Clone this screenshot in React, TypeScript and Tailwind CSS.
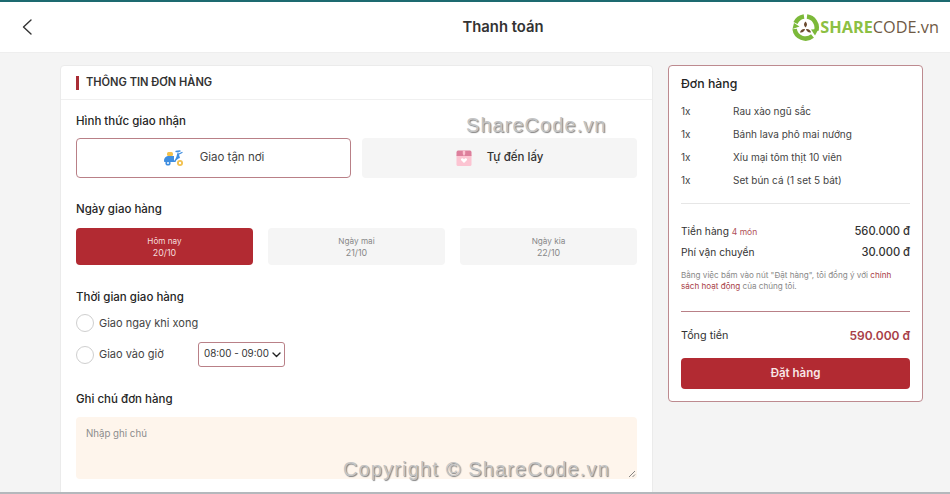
const items = ["Rau xào ngũ sắc", "Bánh lava phô mai nướng", "Xíu mại tôm thịt 10 viên", "Set bún cá (1 set 5 bát)"];

const days = [
  { label: "Hôm nay", date: "20/10", active: true },
  { label: "Ngày mai", date: "21/10", active: false },
  { label: "Ngày kia", date: "22/10", active: false },
];

function Logo() {
  return (
    <div className="flex items-center">
      <svg width="27" height="27" viewBox="0 0 27 27" fill="none">
        <path d="M3.500 9 A11 11 0 0 1 12 2.500" stroke="#7cb93a" strokeWidth="4.500" />
        <path d="M15 2.600 A11 11 0 0 1 24.300 16.500" stroke="#7cb93a" strokeWidth="4.500" />
        <path d="M26.500 15 L23 21.500 L19 15.500 Z" fill="#7cb93a" />
        <path d="M20.500 22 A11 11 0 0 1 2.600 15" stroke="#7cb93a" strokeWidth="4.500" />
        <path d="M0.500 15 L2 9 L7.500 12.500 Z" fill="#7cb93a" />
        <path d="M13.500 7.500 C15.500 9.500 15.500 11.500 13.500 13.500 C11.500 11.500 11.500 9.500 13.500 7.500 Z" fill="#6b4a2e" />
        <path d="M8 18.500 C8.500 16 10.500 14.500 13 15 C12.500 17.500 10.500 19 8 18.500 Z" fill="#6b4a2e" />
        <path d="M19 18.500 C18.500 16 16.500 14.500 14 15 C14.500 17.500 16.500 19 19 18.500 Z" fill="#6b4a2e" />
      </svg>
      <div className="ml-[1px] text-[16.300px] leading-none font-['Open_Sans',sans-serif]">
        <span className="font-bold text-[#8cc043]">SHARE</span>
        <span className="text-[#6f5a45]">CODE.vn</span>
      </div>
    </div>
  );
}

function ScooterIcon() {
  return (
    <svg width="22" height="17" viewBox="0 0 22 17" fill="none">
      <path d="M1 11 C1 7.500 3 6 6 6 L11 6 L11 12 L2 12 C1.400 12 1 11.600 1 11 Z" fill="#3f8ee0" />
      <rect x="4" y="2" width="6" height="4" rx="1.500" fill="#f2c14e" />
      <path d="M15 1.500 L17 8 C15 8.500 13 10 12.500 12 L10 12 C12 10 13.500 8 14 4.500" fill="#3f8ee0" />
      <path d="M13 1.500 L17 1 M16 4 L19 2.500" stroke="#3f8ee0" strokeWidth="1.300" strokeLinecap="round" />
      <circle cx="5" cy="13" r="2.600" fill="#3f8ee0" />
      <circle cx="5" cy="13" r="1" fill="#fff" />
      <circle cx="17" cy="13" r="3" fill="#f2c14e" />
      <circle cx="17" cy="13" r="1.200" fill="#fff" />
    </svg>
  );
}

function BoxIcon() {
  return (
    <svg width="16" height="16" viewBox="0 0 16 16" fill="none">
      <rect x="0.500" y="4" width="15" height="12" rx="1.500" fill="#fcc4d2" />
      <path d="M2 0.500 H14 C15 0.500 15.500 1.500 15.500 2.500 V6 H0.500 V2.500 C0.500 1.500 1 0.500 2 0.500 Z" fill="#dd7f9c" />
      <path d="M6.800 0.500 H9.200 V4 L8 6 L6.800 4 Z" fill="#fcc4d2" />
      <path d="M8 13 L5.200 10.200 C4.300 9 5.800 7.500 7 8.500 L8 9.300 L9 8.500 C10.200 7.500 11.700 9 10.800 10.200 Z" fill="#fff" />
    </svg>
  );
}

function Radio() {
  return <span className="w-[18px] h-[18px] rounded-full border border-[#cfcfcf] bg-white shrink-0" />;
}

export default function App() {
  return (
    <div className="relative h-[494px] overflow-hidden bg-[#f4f4f4] border-b-2 border-[#b4b8bc] font-['Inter',sans-serif] text-[#252525]">
      {/* Header */}
      <header className="h-[53px] bg-white border-t-2 border-[#1d6a70] border-b border-b-[#eeeeee] pl-[21px] pr-[11px] flex items-center justify-between">
        <svg width="12" height="18" viewBox="0 0 12 18" fill="none" stroke="#333" strokeWidth="1.400" strokeLinecap="round" strokeLinejoin="round">
          <path d="M10 2 L2.500 9 L10 16" />
        </svg>
        <h1 className="absolute left-0 right-[-56px] text-center text-[14.800px] font-semibold text-[#333333] pointer-events-none">Thanh toán</h1>
        <Logo />
      </header>

      <div className="flex gap-[15px] pl-[60px] pt-3">
        {/* Left card */}
        <section className="w-[593px] h-[440px] shrink-0 bg-white rounded border border-[#ebebeb]">
          <div className="h-[34px] border-b border-[#f0f0f0] pl-[15px] flex items-center gap-[7px]">
            <span className="w-[3px] h-[14px] bg-[#a92d35]" />
            <h2 className="text-[11.100px] font-semibold text-[#333333]">THÔNG TIN ĐƠN HÀNG</h2>
          </div>

          <div className="px-[15px]">
            <h3 className="mt-[12px] text-[11.500px] leading-[18px] font-medium">Hình thức giao nhận</h3>
            <div className="mt-[8px] flex gap-[11px]">
              <button className="w-[275px] h-10 rounded border border-[#b98087] bg-white flex items-center justify-center gap-[15px] text-[11.500px] text-[#444444]">
                <ScooterIcon />
                Giao tận nơi
              </button>
              <button className="w-[275px] h-10 rounded bg-[#f5f5f5] flex items-center justify-center gap-[15px] text-[11.500px] font-medium text-[#333333]">
                <BoxIcon />
                Tự đến lấy
              </button>
            </div>

            <h3 className="mt-[22px] text-[11.500px] leading-[18px] font-medium">Ngày giao hàng</h3>
            <div className="mt-[10px] flex gap-[15px]">
              {days.map((d) => (
                <button
                  key={d.date}
                  className={`w-[177px] h-[37px] rounded text-[8.200px] leading-[11px] flex flex-col items-center justify-center ${
                    d.active ? "bg-[#b22a32] text-[#f5dcdc]" : "bg-[#f5f5f5] text-[#888888]"
                  }`}
                >
                  <span>{d.label}</span>
                  <span className="text-[8.900px]">{d.date}</span>
                </button>
              ))}
            </div>

            <h3 className="mt-[23px] text-[11.500px] leading-[18px] font-medium">Thời gian giao hàng</h3>
            <div className="mt-[8px] flex items-center gap-[5px] text-[11px] text-[#444444]">
              <Radio />
              Giao ngay khi xong
            </div>
            <div className="mt-[10px] flex items-center text-[11px] text-[#444444]">
              <Radio />
              <span className="ml-[5px] w-[99px]">Giao vào giờ</span>
              <div className="w-[87px] h-[25px] rounded-[3px] border border-[#b98087] pl-[5px] pr-[3px] flex items-center justify-between whitespace-nowrap text-[9.800px] text-[#333333]">
                08:00 - 09:00
                <svg width="9" height="6" viewBox="0 0 9 6" fill="none" stroke="#222" strokeWidth="1.400" strokeLinecap="round" strokeLinejoin="round">
                  <path d="M1 1 L4.500 4.500 L8 1" />
                </svg>
              </div>
            </div>

            <h3 className="mt-[23px] text-[11.500px] leading-[18px] font-medium">Ghi chú đơn hàng</h3>
            <div className="relative mt-[9px] h-[62px] rounded bg-[#fef5ec] px-[10px] py-[10px] text-[9.700px] text-[#8c8c8c]">
              Nhập ghi chú
              <svg className="absolute right-[1px] bottom-[1px]" width="8" height="8" viewBox="0 0 8 8" fill="none" stroke="#666" strokeWidth="0.800">
                <path d="M1 7 L7 1 M4.500 7 L7 4.500" />
              </svg>
            </div>
          </div>
        </section>

        {/* Right card */}
        <aside className="w-[255px] h-[337px] shrink-0 self-start bg-white rounded border border-[#bd8a8f] px-3 pt-[10px]">
          <h2 className="text-[12.300px] leading-[16px] font-medium">Đơn hàng</h2>
          <ul className="mt-[12px] flex flex-col gap-[8px] text-[10px] leading-[15px] text-[#444444]">
            {items.map((name) => (
              <li key={name} className="flex">
                <span className="w-[52px]">1x</span>
                <span>{name}</span>
              </li>
            ))}
          </ul>
          <div className="mt-[15px] border-t border-[#e6e6e6]" />
          <div className="mt-[19px] flex justify-between text-[10.200px] leading-[16px] text-[#333333]">
            <span>
              Tiền hàng <span className="text-[8.500px] text-[#b05058]">4 món</span>
            </span>
            <span className="text-[11.200px] font-medium">560.000 đ</span>
          </div>
          <div className="mt-[4px] flex justify-between text-[10.200px] leading-[16px] text-[#333333]">
            <span>Phí vận chuyển</span>
            <span className="text-[11.200px] font-medium">30.000 đ</span>
          </div>
          <p className="mt-[10px] text-[8.100px] leading-[11px] text-[#888888]">
            Bằng việc bấm vào nút "Đặt hàng", tôi đồng ý với <span className="text-[#a83e47]">chính</span>
            <br />
            <span className="text-[#a83e47]">sách hoạt động</span> của chúng tôi.
          </p>
          <div className="mt-[19px] border-t border-[#b98087]" />
          <div className="mt-[16px] flex justify-between items-center text-[10.800px] leading-[16px]">
            <span className="text-[#333333]">Tổng tiền</span>
            <span className="text-[12px] font-semibold text-[#a83e47]">590.000 đ</span>
          </div>
          <button className="mt-[14px] w-full h-[31px] rounded bg-[#b22a32] text-[11.500px] font-semibold text-[#f8e6e6]">Đặt hàng</button>
        </aside>
      </div>

      {/* Watermarks */}
      <div className="absolute left-[466px] top-[113px] text-[20px] leading-[24px] tracking-[1.050px] font-['Liberation_Sans',sans-serif] text-[#c4c4c4] [text-shadow:1px_1px_1px_#808080] pointer-events-none">ShareCode.vn</div>
      <div className="absolute left-[343px] top-[457px] text-[20px] leading-[24px] tracking-[1.150px] font-['Liberation_Sans',sans-serif] text-[#c4c4c4] [text-shadow:1px_1px_1px_#808080] pointer-events-none">Copyright © ShareCode.vn</div>
    </div>
  );
}
